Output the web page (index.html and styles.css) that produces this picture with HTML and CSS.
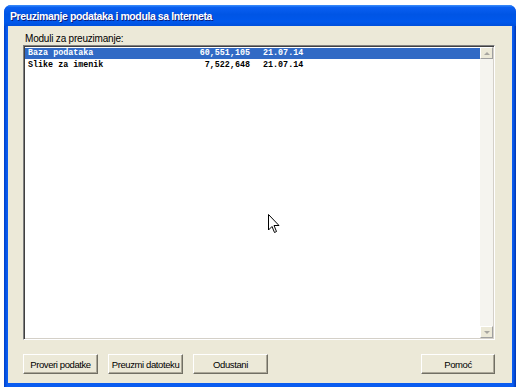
FILE: index.html
```html
<!DOCTYPE html>
<html lang="sr">
<head>
    <meta charset="UTF-8">
    <title>Preuzimanje podataka i modula sa Interneta</title>
    <link rel="stylesheet" href="styles.css">
</head>
<body>
    <div class="window">
        <div class="titlebar">Preuzimanje podataka i modula sa Interneta</div>
        <div class="client">
            <div class="label">Moduli za preuzimanje:</div>
            <div class="listbox">
                <div class="rows">
                    <div class="row selected">
                        <span class="name">Baza podataka</span>
                        <span class="size">60,551,105</span>
                        <span class="date">21.07.14</span>
                    </div>
                    <div class="row">
                        <span class="name">Slike za imenik</span>
                        <span class="size">7,522,648</span>
                        <span class="date">21.07.14</span>
                    </div>
                </div>
                <div class="scrollbar">
                    <div class="sb-btn"><span class="arrow up"></span></div>
                    <div class="sb-track"></div>
                    <div class="sb-btn"><span class="arrow down"></span></div>
                </div>
            </div>
            <div class="buttons">
                <button class="btn">Proveri podatke</button>
                <button class="btn">Preuzmi datoteku</button>
                <button class="btn">Odustani</button>
                <button class="btn help">Pomoć</button>
            </div>
        </div>
    </div>

    <!-- mouse pointer over the list -->
    <svg class="cursor" width="12" height="20" viewBox="0 0 12 20">
        <path d="M0.5 0.5 L0.5 16 L4 12.5 L6.5 18.5 L8.5 17.5 L6 11.5 L11 11.5 Z" fill="#fff" stroke="#000" stroke-width="1"/>
    </svg>
</body>
</html>
```

FILE: styles.css
```css
body {
    margin: 0;
    background: #fff;
    font-family: "Liberation Sans", Arial, sans-serif;
    font-size: 10px;
    position: relative;
    width: 520px;
    height: 391px;
    overflow: hidden;
}

.window {
    margin: 5px 4px 0 4px;
    width: 512px;
    height: 382px;
    border-radius: 7px 7px 0 0;
    display: flex;
    flex-direction: column;
    box-sizing: border-box;
    padding: 0 4px 4px 4px;
    background: linear-gradient(to right, #0040c8, #0a5cf0 3px, #0a5cf0 calc(100% - 3px), #0036b0);
}

.titlebar {
    height: 21px;
    margin: 0 -4px;
    padding-left: 6px;
    border-radius: 7px 7px 0 0;
    background: linear-gradient(#3d8ffa 0%, #0a5ff0 12%, #0055e5 45%, #0058ec 80%, #0050dc 100%);
    color: #fff;
    font-weight: bold;
    font-size: 10.5px;
    letter-spacing: -0.4px;
    line-height: 22px;
    text-shadow: 1px 1px 0 #0a1e80;
}

.client {
    flex: 1;
    background: #ece9d8;
    padding: 6px 17px 0 15px;
    display: flex;
    flex-direction: column;
}

.label {
    font-size: 10px;
    letter-spacing: -0.2px;
    line-height: 13px;
    padding-left: 2px;
    color: #000;
}

.listbox {
    height: 295px;
    box-sizing: border-box;
    background: #fff;
    border-top: 1px solid #808080;
    border-left: 1px solid #808080;
    border-right: 1px solid #fff;
    border-bottom: 1px solid #fff;
    box-shadow: inset 1px 1px 0 #404040, inset -1px -1px 0 #d4d0c8;
    padding: 1px;
    display: flex;
}

.rows {
    flex: 1;
    padding-top: 1px;
}

.row {
    display: flex;
    height: 11px;
    line-height: 11px;
    font-family: "Liberation Mono", "Courier New", monospace;
    font-size: 8.4px;
    font-weight: bold;
    color: #000;
    padding-left: 3px;
    margin-bottom: 1px;
}

.row.selected {
    background: #316ac5;
    color: #fff;
}

.name {
    width: 130px;
}

.size {
    width: 92px;
    text-align: right;
}

.date {
    margin-left: 13px;
}

.scrollbar {
    width: 13px;
    display: flex;
    flex-direction: column;
    background: #f5f4ef;
}

.sb-track {
    flex: 1;
}

.sb-btn {
    height: 12px;
    box-sizing: border-box;
    background: #ece9d8;
    border-top: 1px solid #fff;
    border-left: 1px solid #fff;
    border-right: 1px solid #a0a0a0;
    border-bottom: 1px solid #a0a0a0;
    display: flex;
    align-items: center;
    justify-content: center;
}

.arrow {
    width: 0;
    height: 0;
    border-left: 3px solid transparent;
    border-right: 3px solid transparent;
}

.arrow.up {
    border-bottom: 3px solid #a7a6a0;
}

.arrow.down {
    border-top: 3px solid #a7a6a0;
}

.buttons {
    display: flex;
    gap: 10px;
    margin-top: 14px;
}

.btn {
    width: 75px;
    height: 20px;
    box-sizing: border-box;
    background: #ece9d8;
    border: none;
    border-top: 1px solid #fff;
    border-left: 1px solid #fff;
    border-right: 1px solid #716f64;
    border-bottom: 1px solid #716f64;
    box-shadow: inset -1px -1px 0 #aca899;
    font-family: "Liberation Sans", Arial, sans-serif;
    font-size: 9.5px;
    letter-spacing: -0.4px;
    white-space: nowrap;
    color: #000;
    padding: 0;
    margin: 0;
}

.btn.help {
    margin-left: auto;
    width: 74px;
}

.cursor {
    position: absolute;
    left: 268px;
    top: 214px;
}
```
